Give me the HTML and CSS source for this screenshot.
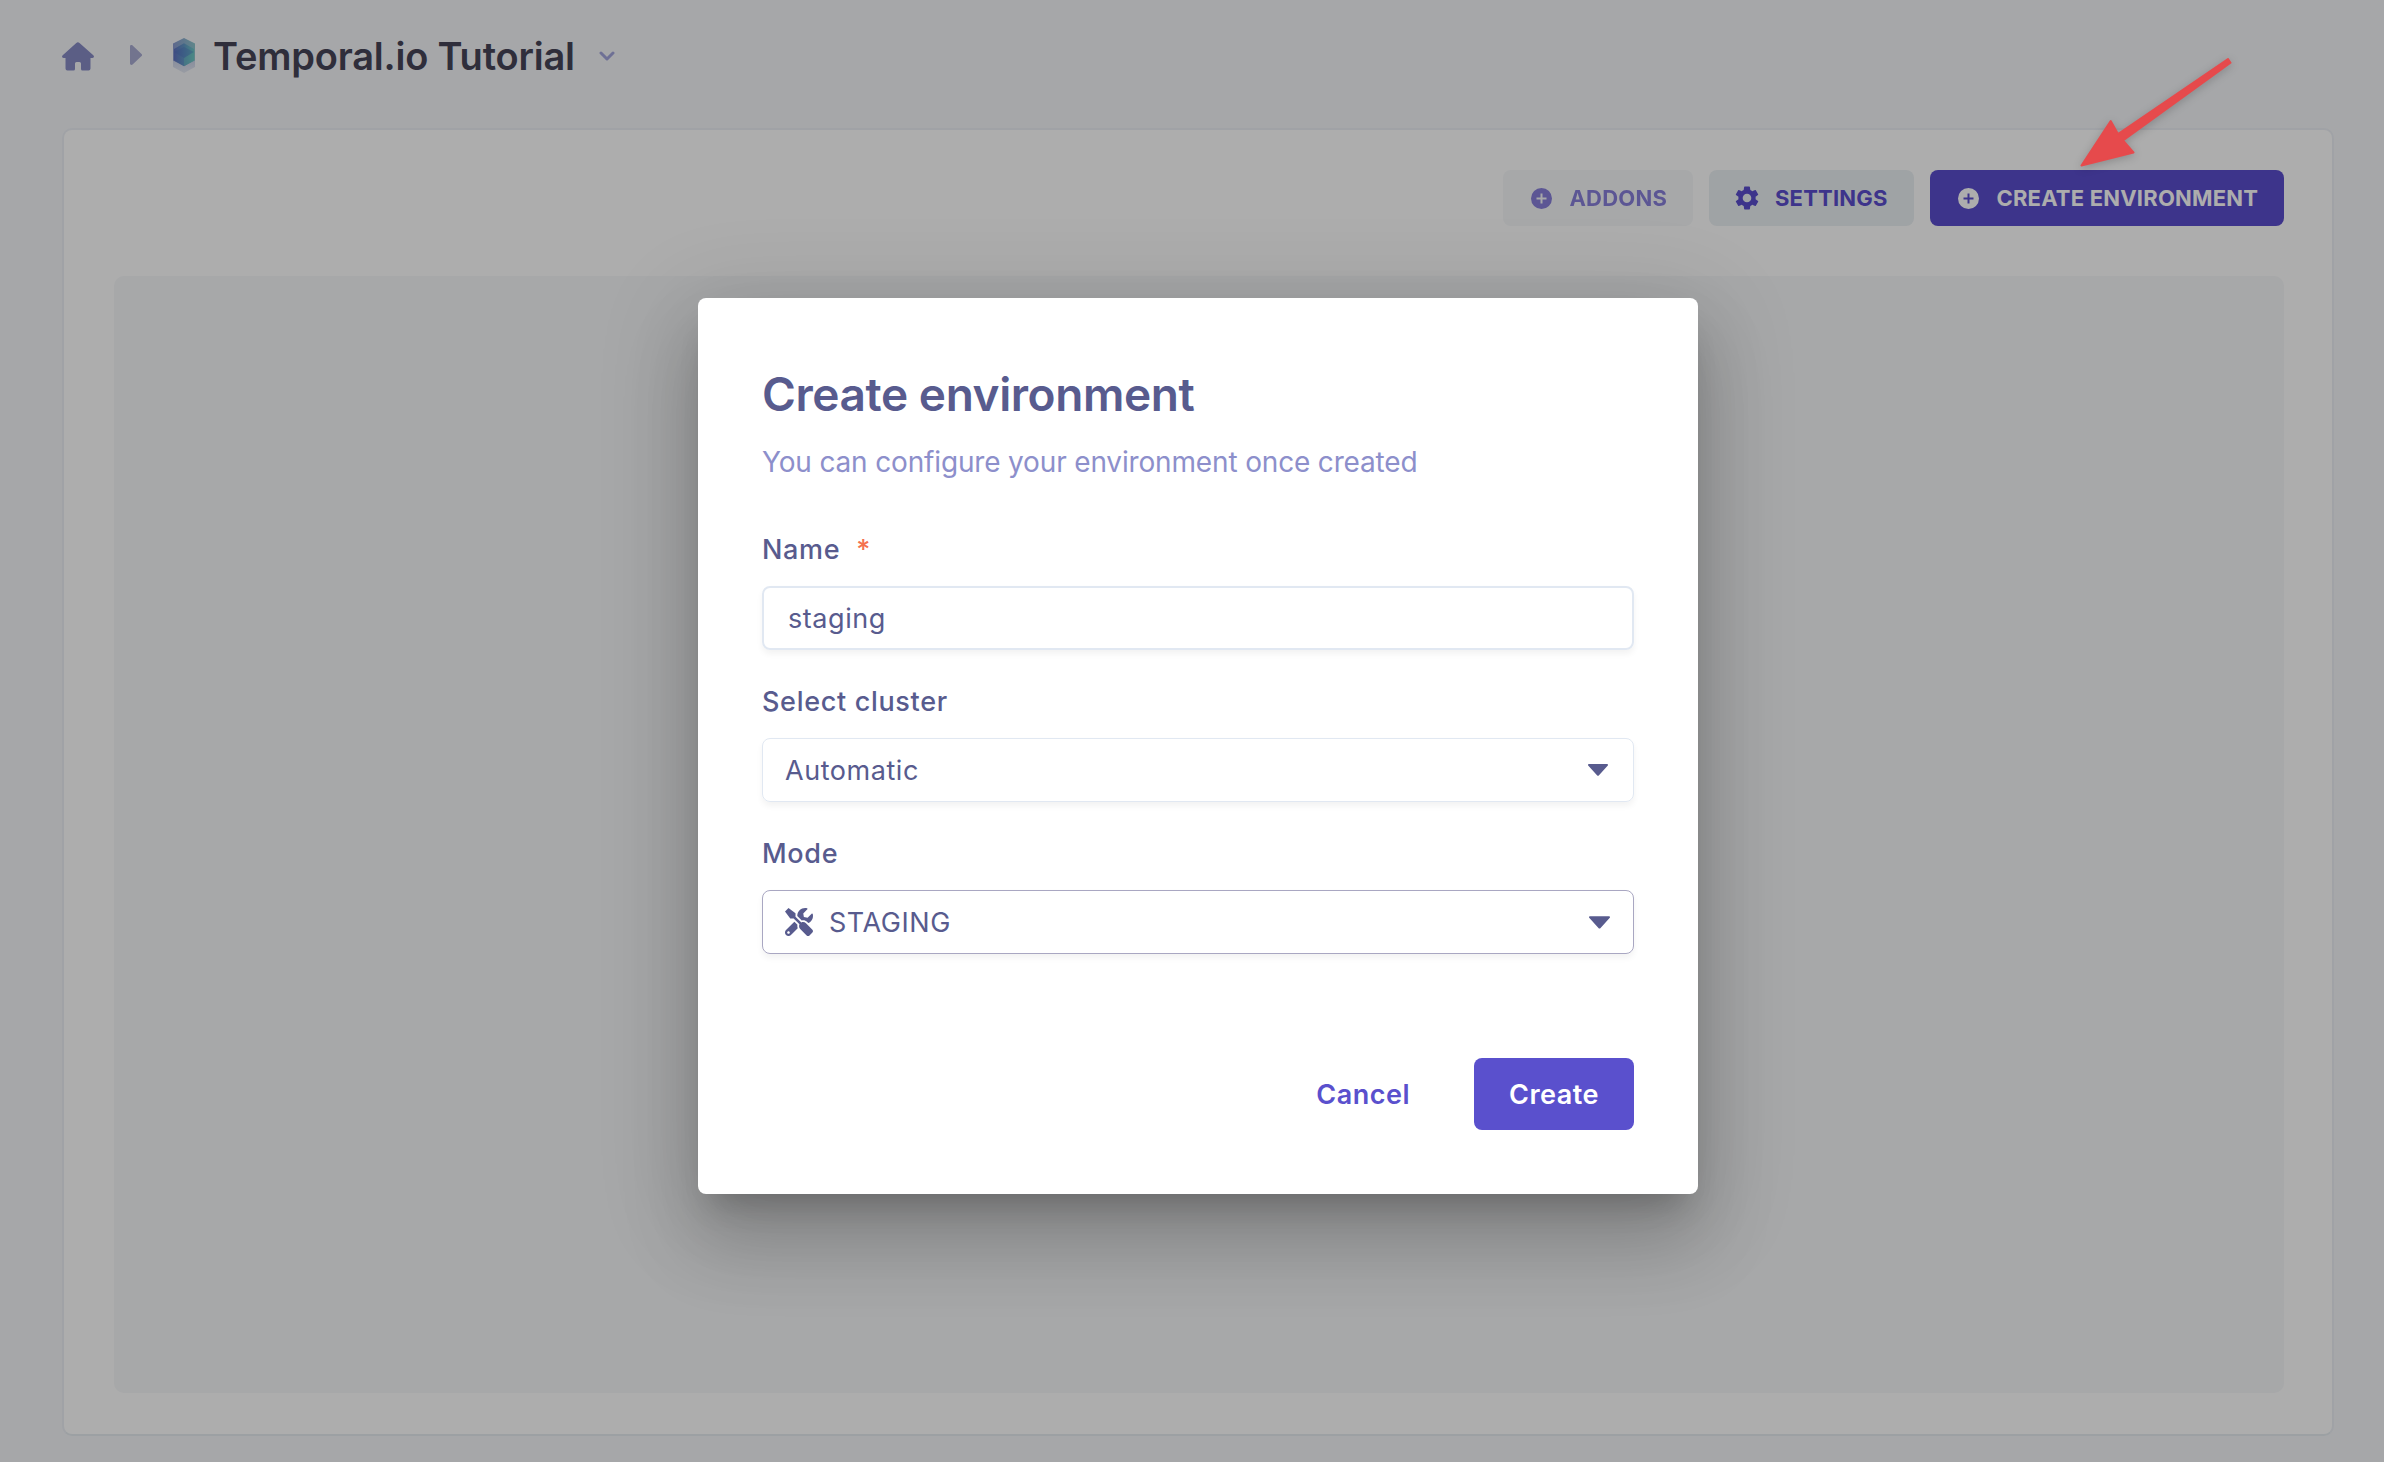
FILE: index.html
```html
<!DOCTYPE html>
<html lang="en">
<head>
<meta charset="utf-8">
<title>Temporal.io Tutorial</title>
<link rel="stylesheet" href="styles.css">
</head>
<body>
<div class="page">
  <header class="crumbs">
    <svg class="home" viewBox="0 0 32 29"><path d="M14.3.9a2.300 2.300 0 0 1 3.200 0L31.300 13.200c1.200 1.100.7 2.800-.9 2.800H28.500V26.500a2 2 0 0 1-2 2H20.500a1.500 1.500 0 0 1-1.500-1.500V21.500a1.500 1.500 0 0 0-1.500-1.500H14.500a1.500 1.500 0 0 0-1.500 1.500V27a1.500 1.500 0 0 1-1.500 1.500H5.500a2 2 0 0 1-2-2V16H1.600C0 16-.5 14.300.7 13.200z"/></svg>
    <svg class="crumb-arrow" viewBox="0 0 12 20"><path d="M0 1.500C0 .2 1.500-.3 2.600.5L11.300 8.700a1.700 1.700 0 0 1 0 2.600L2.600 19.500C1.500 20.300 0 19.800 0 18.500z"/></svg>
    <svg class="logo" viewBox="0 0 22 35">
      <defs>
        <linearGradient id="outer" x1="0" x2="1"><stop offset="0" stop-color="#8b9ad0"/><stop offset="1" stop-color="#8cc6cc"/></linearGradient>
        <linearGradient id="inner" x1="0" x2="1"><stop offset="0" stop-color="#5f72c2"/><stop offset=".5" stop-color="#6298c6"/><stop offset="1" stop-color="#6cc6c6"/></linearGradient>
        <linearGradient id="reflection" x1="0" x2="0" y1="0" y2="1"><stop offset="0" stop-color="#a9b6dc"/><stop offset="1" stop-color="#d9dfec"/></linearGradient>
      </defs>
      <path d="M0 17 11 23l11-6v12l-11 6-11-6z" fill="url(#reflection)" opacity=".7"/>
      <path d="M0 5.500 11 0l11 5.500v17L11 28 0 22.500z" fill="url(#outer)"/>
      <path d="M1 11 11 5.300 21 11v11.500L11 28.300 1 22.500z" fill="url(#inner)"/>
      <path d="M1 14 11 9l10 5-10 6z" fill="#4a6cc0" opacity=".3"/>
      <path d="M11 20 21 14v8.500l-10 5.800z" fill="#6fd0c4" opacity=".35"/>
    </svg>
    <h1 class="project">Temporal.io Tutorial</h1>
    <svg class="chevron" viewBox="0 0 16 10"><path d="M2 2l6 6 6-6"/></svg>
  </header>
  <main class="card">
    <div class="actions">
      <button class="btn addons"><svg class="plus" viewBox="0 0 21 21"><path fill-rule="evenodd" d="M10.500 0a10.500 10.500 0 1 0 0 21 10.500 10.500 0 0 0 0-21zM9.500 5.500h2v4h4v2h-4v4h-2v-4h-4v-2h4z"/></svg><span>ADDONS</span></button>
      <button class="btn settings"><svg class="gear" viewBox="2 2 20 20"><path d="M19.140 12.940c.04-.3.060-.61.060-.94s-.02-.64-.07-.94l2.030-1.580a.49.49 0 0 0 .12-.61l-1.920-3.320a.49.49 0 0 0-.59-.22l-2.390.96a7 7 0 0 0-1.620-.94L14.400 2.810A.48.48 0 0 0 13.920 2.400h-3.840a.48.48 0 0 0-.47.41L9.250 5.350c-.59.24-1.130.57-1.620.94l-2.390-.96a.49.49 0 0 0-.59.22L2.740 8.870a.48.48 0 0 0 .12.61l2.030 1.580a6 6 0 0 0 0 1.880l-2.030 1.580a.49.49 0 0 0-.12.61l1.920 3.320c.12.220.37.290.59.220l2.390-.96c.5.38 1.030.7 1.620.94l.36 2.540c.05.240.24.410.48.410h3.840c.24 0 .44-.17.47-.41l.36-2.540c.59-.24 1.130-.56 1.620-.94l2.390.96c.22.080.47 0 .59-.22l1.920-3.320a.49.49 0 0 0-.12-.61zM12 15.600a3.600 3.600 0 1 1 0-7.200 3.600 3.600 0 0 1 0 7.200z"/></svg><span>SETTINGS</span></button>
      <button class="btn create-env"><svg class="plus" viewBox="0 0 21 21"><path fill-rule="evenodd" d="M10.500 0a10.500 10.500 0 1 0 0 21 10.500 10.500 0 0 0 0-21zM9.500 5.500h2v4h4v2h-4v4h-2v-4h-4v-2h4z"/></svg><span>CREATE ENVIRONMENT</span></button>
    </div>
    <div class="canvas"></div>
  </main>
</div>
<div class="backdrop">
  <section class="dialog">
    <h2 class="title">Create environment</h2>
    <p class="subtitle">You can configure your environment once created</p>
    <div class="label">Name<span class="required">*</span></div>
    <div class="field input">staging</div>
    <div class="label">Select cluster</div>
    <div class="field">Automatic<svg class="caret" viewBox="0 0 20 12"><path d="M1.200 0h17.600c1.200 0 1.500 1 .8 1.700l-8.600 9.600c-.6.700-1.400.7-2 0L.4 1.700C-.3 1 0 0 1.200 0z"/></svg></div>
    <div class="label">Mode</div>
    <div class="field focused"><svg class="tools" viewBox="0 0 512 512"><path d="M501.100 395.700L384 278.600c-23.100-23.100-57.600-27.600-85.400-13.900L192 158.100V96L64 0 0 64l96 128h62.100l106.600 106.600c-13.600 27.800-9.200 62.300 13.900 85.400l117.100 117.100c14.600 14.600 38.200 14.600 52.700 0l52.700-52.700c14.500-14.600 14.500-38.200 0-52.700zM331.700 225c28.300 0 54.900 11 74.900 31l19.400 19.400c15.800-6.900 30.800-16.500 43.800-29.500 37.100-37.100 49.700-89.300 37.900-136.700-2.200-9-13.500-12.100-20.100-5.500l-74.400 74.400-67.900-11.300L334 98.900l74.400-74.400c6.600-6.600 3.400-17.900-5.700-20.200-47.400-11.700-99.600.9-136.600 37.900-28.500 28.500-41.900 66.100-41.200 103.600l82.100 82.100c8.100-1.900 16.500-2.900 24.700-2.900zm-103.900 82l-56.700-56.700L18.700 402.800c-25 25-25 65.500 0 90.500s65.500 25 90.500 0l123.600-123.600c-7.600-19.900-9.900-41.600-5-62.700zM64 472c-13.200 0-24-10.800-24-24 0-13.300 10.700-24 24-24s24 10.700 24 24c0 13.200-10.700 24-24 24z"/></svg>STAGING<svg class="caret caret-mode" viewBox="0 0 20 12"><path d="M1.200 0h17.600c1.200 0 1.500 1 .8 1.700l-8.600 9.600c-.6.700-1.400.7-2 0L.4 1.700C-.3 1 0 0 1.200 0z"/></svg></div>
    <div class="footer"><button class="cancel">Cancel</button><button class="create">Create</button></div>
  </section>
</div>
<svg class="pointer" viewBox="0 0 160 116"><path d="M5.500 110.500 34.700 66 42 79 152 4l2.500 3.700L47 85.500l10.500 12z"/></svg>
</body>
</html>
```
FILE: styles.css
```css
* { box-sizing: border-box; }
body { margin: 0; width: 2384px; height: 1462px; overflow: hidden; background: #f5f7fa; color: #585b8e; font-family: Inter, sans-serif; }
h1, h2, p { margin: 0; }
button { border: 0; font-family: inherit; padding: 0; display: flex; align-items: center; }
svg { flex: none; display: block; }
h1, h2, p, button { white-space: nowrap; }
.page { height: 1462px; padding: 0 50px 26px 62px; display: flex; flex-direction: column; }
.crumbs { height: 128px; display: flex; align-items: flex-start; }
.home { width: 32px; height: 29px; margin-top: 41.500px; fill: #878bc5; }
.crumb-arrow { width: 12px; height: 20px; margin: 45px 0 0 36px; fill: #a9abd2; }
.logo { width: 22px; height: 35px; margin: 38px 0 0 31px; }
.project { margin: 32px 0 0 18px; width: 364px; font-size: 38px; line-height: 48px; font-weight: 600; letter-spacing: -.2px; color: #464457; }
.chevron { width: 16px; height: 10px; margin: 51px 0 0 22px; fill: none; stroke: #a3a5dc; stroke-width: 3; stroke-linecap: round; stroke-linejoin: round; }
.card { flex: 1; display: flex; flex-direction: column; background: #fff; border: 2px solid #eceff5; border-bottom-color: #e6ecf1; border-radius: 10px; padding: 40px 48px 41px 50px; }
.actions { display: flex; justify-content: flex-end; gap: 16px; }
.btn { height: 56px; border-radius: 8px; font-size: 22px; font-weight: 700; letter-spacing: .2px; color: #5a4dcd; }
.btn svg { fill: currentColor; }
.plus { width: 21px; height: 21px; margin: 0 18px 0 27.500px; }
.addons { width: 190px; background: #f6f8fa; }
.addons > * { opacity: .7; }
.settings { width: 205px; background: #ebf0f3; }
.gear { width: 24px; height: 24px; margin: 0 16px 0 26px; }
.create-env { width: 354px; background: #5a4dcd; color: #fff; }
.canvas { flex: 1; margin-top: 50px; background: #f6f8fa; border-radius: 10px; }
.backdrop { position: absolute; inset: 0; background: rgba(0,0,0,.32); padding: 298px 0 0 698px; }
.dialog { width: 1000px; height: 896px; background: #fff; border-radius: 8px; padding: 64px; display: flex; flex-direction: column; box-shadow: 0 22px 30px -14px rgba(0,0,0,.2), 0 48px 76px 6px rgba(0,0,0,.14), 0 18px 92px 16px rgba(0,0,0,.12); }
.title { font-size: 46px; line-height: 64px; font-weight: 600; letter-spacing: -.42px; }
.subtitle { font-size: 28px; line-height: 36px; margin-top: 18px; letter-spacing: -.16px; color: #8d8fcb; }
.label { font-size: 27px; line-height: 32px; font-weight: 500; letter-spacing: .68px; margin-top: 54px; display: flex; }
.required { color: #f4714f; margin-left: 16px; }
.field { height: 64px; flex: none; margin-top: 20px; border: 1px solid #e1e8f2; border-radius: 8px; padding: 0 25px 0 22px; display: flex; align-items: center; font-size: 27px; letter-spacing: .55px; box-shadow: 0 4px 6px rgba(0,0,0,.05); }
.input { border-width: 2px; padding-left: 24px; }
.field + .label { margin-top: 36px; }
.focused { border-color: #a9a7c2; padding-right: 23px; }
.caret { width: 20px; height: 12px; margin-left: auto; fill: #585b8e; }
.caret-mode { width: 21px; height: 13px; }
.tools { width: 28px; height: 28px; margin-right: 16px; fill: #585b8e; }
.footer { margin-top: 104px; display: flex; justify-content: flex-end; gap: 64px; }
.cancel, .create { font-size: 27px; font-weight: 600; letter-spacing: .5px; height: 72px; background: none; color: #5a50cd; }
.create { width: 160px; justify-content: center; background: #5a50cd; color: #fff; border-radius: 8px; }
.pointer { position: absolute; left: 2076px; top: 55px; width: 160px; height: 116px; overflow: visible; fill: #e64a4c; stroke: #e64a4c; stroke-width: 2; stroke-linejoin: round; filter: drop-shadow(0 2px 4px rgba(0,0,0,.2)); }
```
